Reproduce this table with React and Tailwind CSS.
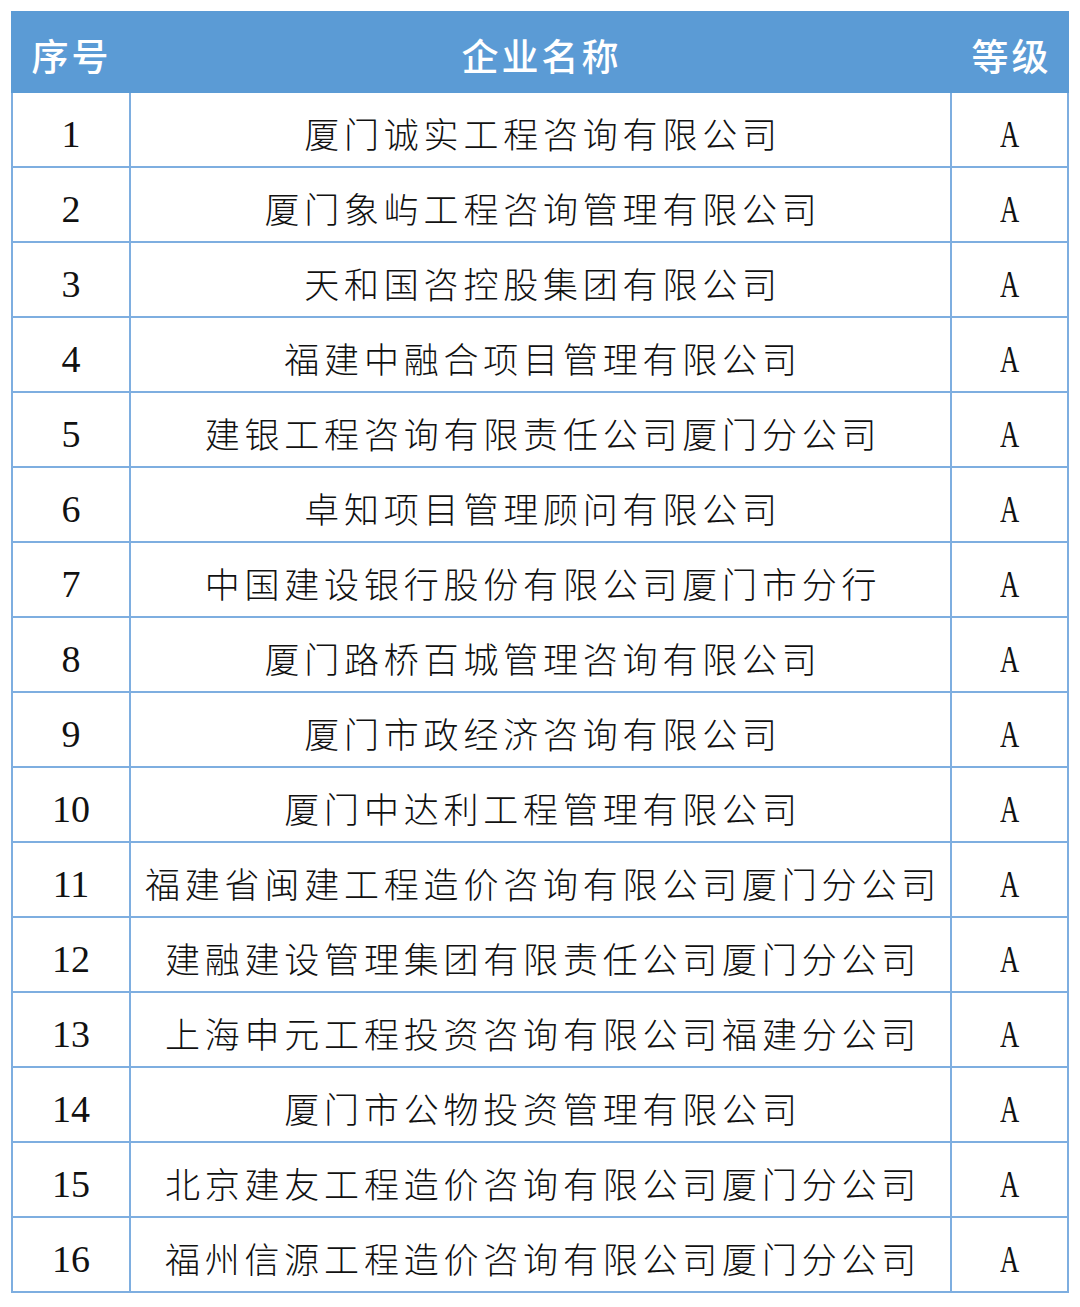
import React from "react";

const rows = [
  "厦门诚实工程咨询有限公司",
  "厦门象屿工程咨询管理有限公司",
  "天和国咨控股集团有限公司",
  "福建中融合项目管理有限公司",
  "建银工程咨询有限责任公司厦门分公司",
  "卓知项目管理顾问有限公司",
  "中国建设银行股份有限公司厦门市分行",
  "厦门路桥百城管理咨询有限公司",
  "厦门市政经济咨询有限公司",
  "厦门中达利工程管理有限公司",
  "福建省闽建工程造价咨询有限公司厦门分公司",
  "建融建设管理集团有限责任公司厦门分公司",
  "上海申元工程投资咨询有限公司福建分公司",
  "厦门市公物投资管理有限公司",
  "北京建友工程造价咨询有限公司厦门分公司",
  "福州信源工程造价咨询有限公司厦门分公司",
];

const cjk = { fontFamily: '"Noto Sans CJK SC", "Noto Sans", sans-serif' };
const serif = { fontFamily: '"Liberation Serif", "Noto Sans CJK SC", serif' };

export default function App() {
  return (
    <div className="w-[1080px] h-[1307px] bg-white pt-[11px] pl-[11px]">
      <div className="w-[1058px]">
        <div
          className="grid grid-cols-[118px_822px_118px] h-[82px] bg-[#5b9bd5] text-white text-[37px] font-medium tracking-[3px]"
          style={cjk}
        >
          <div className="flex items-center justify-center pt-[8px] pl-[3px]">序号</div>
          <div className="flex items-center justify-center pt-[8px] pl-[3px]">企业名称</div>
          <div className="flex items-center justify-center pt-[8px] pl-[3px]">等级</div>
        </div>
        <div className="grid grid-cols-[116px_819px_115px] auto-rows-[73px] gap-[2px] px-[2px] pb-[2px] bg-[#7eaee0]">
          {rows.map((name, i) => (
            <React.Fragment key={i}>
              <div
                className="bg-white flex items-center justify-center pt-[10px] text-[38px] text-[#111]"
                style={serif}
              >
                {i + 1}
              </div>
              <div
                className="bg-white flex items-center justify-center pt-[8px] pl-[5px] text-[35px] font-light tracking-[4.8px] text-[#111]"
                style={cjk}
              >
                {name}
              </div>
              <div
                className="bg-white flex items-center justify-center pt-[10px] text-[38px] text-[#111]"
                style={serif}
              >
                <span className="inline-block scale-x-[0.7]">A</span>
              </div>
            </React.Fragment>
          ))}
        </div>
      </div>
    </div>
  );
}
